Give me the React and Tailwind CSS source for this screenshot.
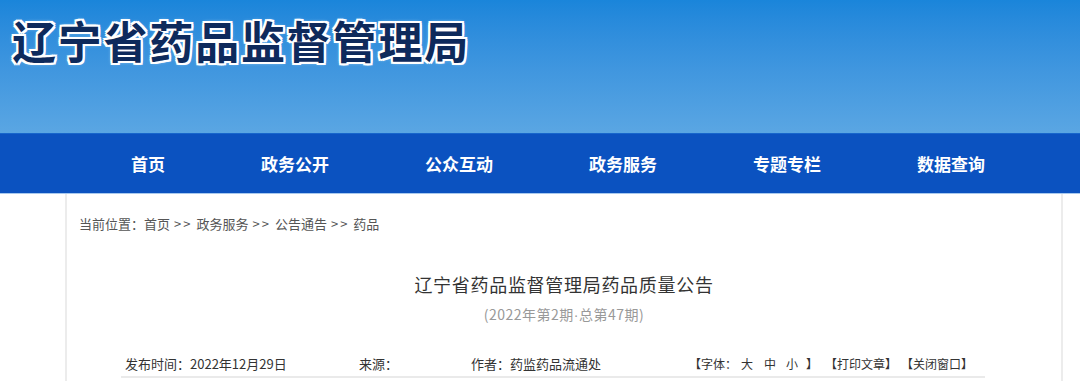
export default function App() {
  const navItems = ["首页", "政务公开", "公众互动", "政务服务", "专题专栏", "数据查询"];
  const cjk = { fontFamily: '"Noto Sans CJK SC", "Noto Sans", sans-serif' };
  const Sep = () => <span className="mx-[4px] tracking-[2px]">&gt;&gt;</span>;
  return (
    <div className="w-[1080px] h-[381px] overflow-hidden bg-white" style={cjk}>
      {/* Header */}
      <div className="h-[133px] bg-gradient-to-b from-[#1a85da] to-[#5aa6e3] pl-[12px] pt-[12px]">
        <h1 className="text-[44px] leading-[56px] font-bold tracking-[1.8px] text-[#0e2a5c] [text-shadow:2px_0_0_#fff,-2px_0_0_#fff,0_2px_0_#fff,0_-2px_0_#fff,2px_2px_0_#fff,-2px_-2px_0_#fff,2px_-2px_0_#fff,-2px_2px_0_#fff,0_0_4px_#e8f2ff]">
          辽宁省药品监督管理局
        </h1>
      </div>
      {/* Nav */}
      <div className="h-[61px] bg-[#0b52c0] border-t border-[#1766cc] border-b border-b-[#a8c9ee] flex items-center pl-[131px] gap-[96px]">
        {navItems.map((t) => (
          <span key={t} className="text-white text-[17px] font-bold leading-none">
            {t}
          </span>
        ))}
      </div>
      {/* Content */}
      <div className="ml-[65px] w-[998px] h-[200px] border-l-2 border-r-2 border-[#ececec] relative">
        <div className="pl-[12px] pt-[21px] text-[13px] leading-[18px] text-[#555] flex">
          <span>当前位置：首页</span>
          <Sep />
          <span>政务服务</span>
          <Sep />
          <span>公告通告</span>
          <Sep />
          <span>药品</span>
        </div>
        <div className="mt-[39px] text-center text-[18px] leading-[24px] tracking-[0.7px] text-[#333]">
          辽宁省药品监督管理局药品质量公告
        </div>
        <div className="mt-[8px] text-center text-[14px] leading-[20px] tracking-[0.5px] text-[#999]">
          (2022年第2期<span style={{ fontFamily: '"Liberation Sans", sans-serif' }}>·</span>总第47期)
        </div>
        <div className="ml-[54px] mt-[30px] w-[864px] border-b-2 border-[#eaeaea] flex items-center pl-[4px] pb-[3px] text-[13px] leading-[18px] text-[#333]">
          <span className="w-[234px]">发布时间：2022年12月29日</span>
          <span className="w-[112px]">来源：</span>
          <span className="w-[218px]">作者：药监药品流通处</span>
          <span className="text-[12px] flex items-center">
            <span>【字体：</span>
            <span className="ml-[4px]">大</span>
            <span className="ml-[11px]">中</span>
            <span className="ml-[10px]">小</span>
            <span className="ml-[8px]">】</span>
            <span className="ml-[7px]">【打印文章】</span>
            <span className="ml-[4px]">【关闭窗口】</span>
          </span>
        </div>
      </div>
    </div>
  );
}
